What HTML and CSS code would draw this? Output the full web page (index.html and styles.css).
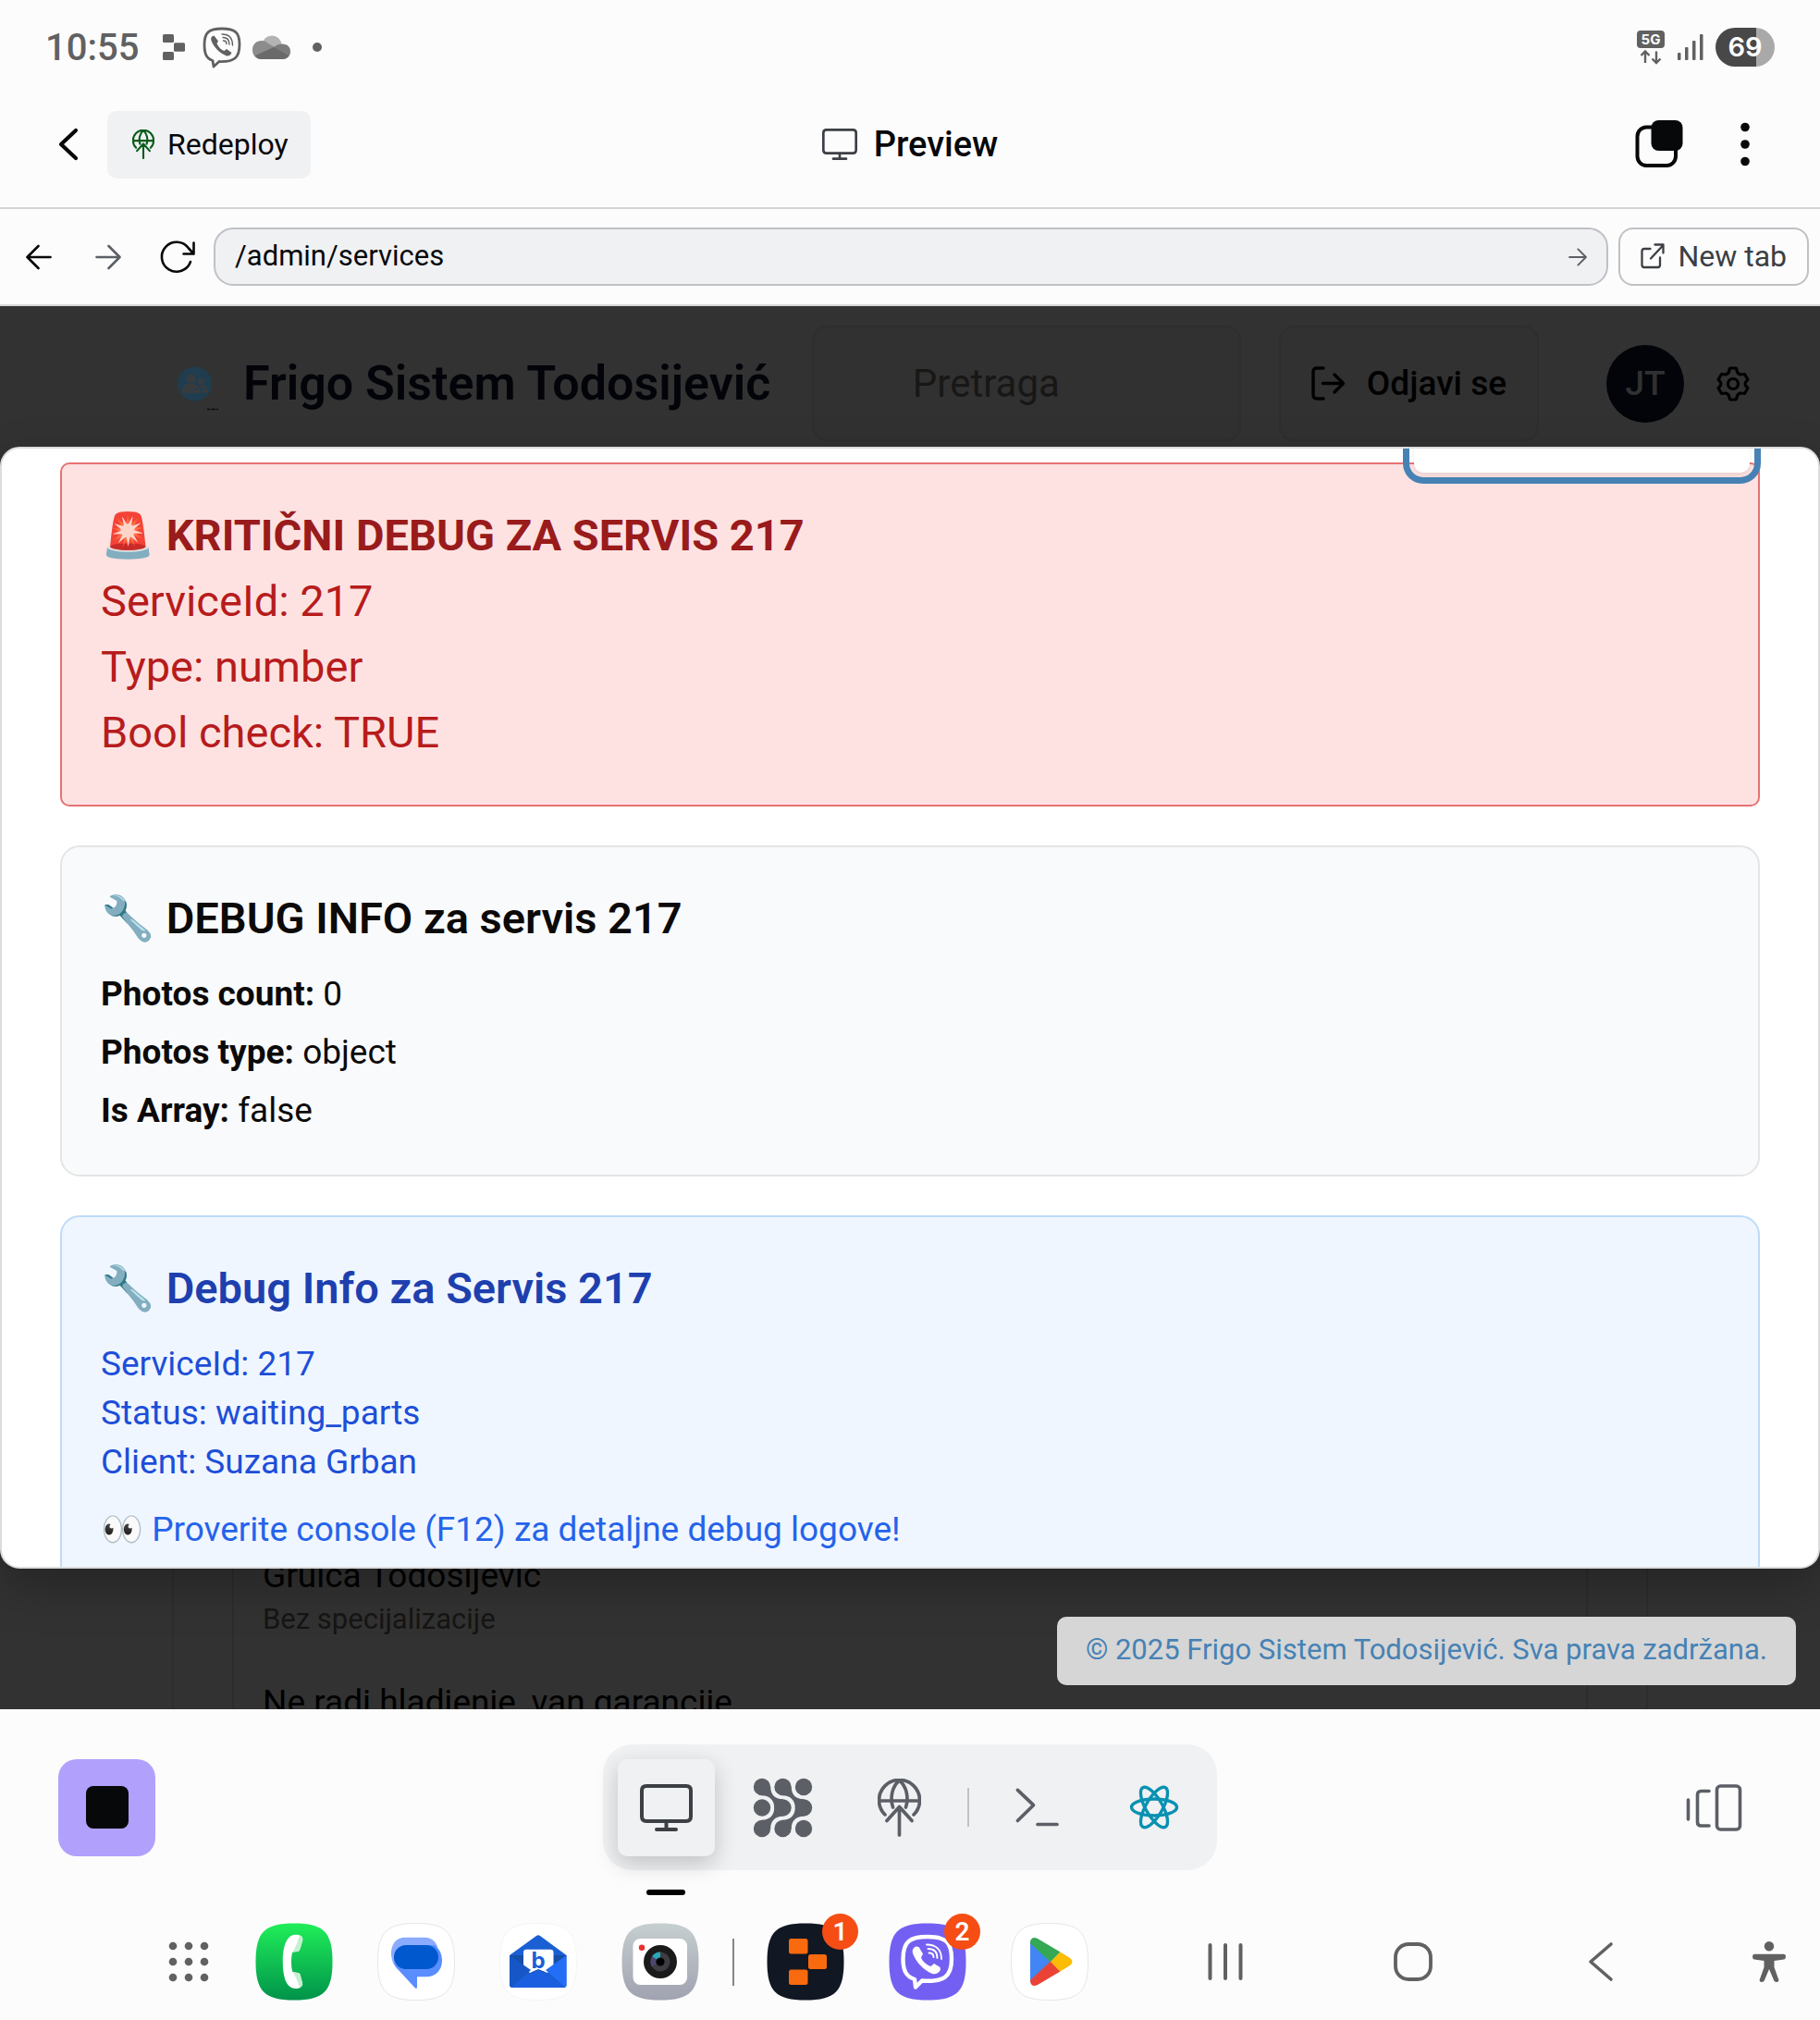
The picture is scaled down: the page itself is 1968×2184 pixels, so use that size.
FILE: index.html
```html
<!DOCTYPE html>
<html lang="sr-Latn">
<head>
<meta charset="utf-8">
<meta name="viewport" content="width=device-width, initial-scale=1">
<title>Preview</title>
<link rel="stylesheet" href="styles.css">
</head>
<body>
<svg class="defs" aria-hidden="true">
  <defs>
    <symbol id="i-deploy" viewBox="0 0 47 63">
      <path d="M8 39A22 22 0 1 1 39 39M1.500 24H45.500M23.500 2C16 8 13 20 16.500 31M23.500 2C31 8 34 20 30.500 31M23.500 61V31M10 45.500L23.500 30.500L37 45.500" fill="none" stroke="currentColor" stroke-linecap="round" stroke-linejoin="round"/>
    </symbol>
    <symbol id="i-monitor" viewBox="0 0 57 51">
      <path d="M7 2H50Q55 2 55 7V35Q55 40 50 40H7Q2 40 2 35V7Q2 2 7 2ZM28.500 40V49M18 49H39" fill="none" stroke="currentColor" stroke-width="4" stroke-linecap="round"/>
    </symbol>
    <symbol id="i-arrow" viewBox="0 0 28 28">
      <path d="M1.500 14H26M14.500 2L26.500 14L14.500 26" fill="none" stroke="currentColor" stroke-width="2.600" stroke-linecap="round" stroke-linejoin="round"/>
    </symbol>
    <symbol id="i-tile" viewBox="0 0 84 84">
      <path d="M42 .5C10 .5 .5 10 .5 42S10 83.500 42 83.500 83.500 74 83.500 42 74 .5 42 .5Z"/>
    </symbol>
  </defs>
</svg>

<div class="status">
  <div class="status-left">
    <span class="clock">10:55</span>
    <svg width="24" height="28" viewBox="0 0 24 28" fill="#616161"><rect width="12" height="9" rx="1.500"/><rect x="12" y="9.300" width="12" height="9.500" rx="1.500"/><rect y="19" width="12" height="9" rx="1.500"/></svg>
    <svg class="status-viber" width="42" height="44" viewBox="0 0 42 44" fill="none" stroke="#616161" stroke-linecap="round">
      <path d="M21 2C7 2 2 6 2 19C2 29 4 34 11 36.500L12 43L18 37.500C35 38 40 33 40 19C40 6 35 2 21 2Z" stroke-width="2.800" stroke-linejoin="round"/>
      <path d="M12.500 9.500C9.500 10 8.500 12 9.500 15C12.500 22.500 18 28 26 31.500C28.500 32 31 30 31.500 28L26 24L23.500 26C20 25 17 21.500 15.500 18L17 15.500Z" fill="#616161" stroke="none"/>
      <path d="M21 8C28.500 8 32.500 12 32.500 20M22 11.500C27 11.500 29 14 29 19M22.500 15C25 15 26 16 26 18.500" stroke-width="1.400"/>
    </svg>
    <svg width="41" height="27" viewBox="0 0 41 27"><circle cx="21" cy="11" r="10.500" fill="#b3b3b3"/><path d="M10 6C13 6 15 7 17 9L31 17L10 26C3 26 0 21 0 16C0 10 4 6 10 6Z" fill="#8c8c8c"/><path d="M32 9.500C38 9.500 41 13 41 18C41 23 37 26 32 26H20L22 14C25 11 28 9.500 32 9.500Z" fill="#7c7c7c"/><path d="M3 22L23 13L39 22C37 25 35 26 32 26H10C7 26 5 25 3 22Z" fill="#6a6a6a"/></svg>
    <span class="dot"></span>
  </div>
  <div class="status-right">
    <svg width="32" height="36" viewBox="0 0 32 36"><rect x="1" width="30" height="19" rx="4" fill="#616161"/><text x="16" y="15" text-anchor="middle" class="net">5G</text><path d="M10 35V23M5.500 27L10 22.500L14.500 27M22 22.500V34.500M17.500 30.500L22 35L26.500 30.500" fill="none" stroke="#616161" stroke-width="2.400"/></svg>
    <svg width="28" height="28" viewBox="0 0 28 28" fill="#616161"><rect y="20" width="3.500" height="8" rx="1"/><rect x="8" y="14" width="3.500" height="14" rx="1"/><rect x="16" y="7" width="3.500" height="21" rx="1"/><rect x="24" width="3.500" height="28" rx="1"/></svg>
    <span class="battery">69</span>
  </div>
</div>

<header class="topbar">
  <div class="topbar-left">
    <button class="icon-btn" aria-label="Back"><svg width="22" height="36" viewBox="0 0 22 36"><path d="M19 3L3 18L19 33" fill="none" stroke="#07080a" stroke-width="4.200" stroke-linecap="round" stroke-linejoin="round"/></svg></button>
    <button class="redeploy"><svg width="24" height="32" class="green" stroke-width="4.200"><use href="#i-deploy"/></svg>Redeploy</button>
  </div>
  <h1 class="topbar-title"><svg width="38" height="34"><use href="#i-monitor"/></svg>Preview</h1>
  <div class="topbar-right">
    <button class="icon-btn" aria-label="Windows"><svg width="52" height="52" viewBox="0 0 52 52"><rect x="2.500" y="7.500" width="41.500" height="41.500" rx="10" fill="none" stroke="#07080a" stroke-width="4"/><rect x="17.500" y="0" width="34" height="33" rx="8" fill="#07080a"/></svg></button>
    <button class="icon-btn" aria-label="More"><svg width="10" height="48" viewBox="0 0 10 48" fill="#07080a"><circle cx="5" cy="5.500" r="4.800"/><circle cx="5" cy="24" r="4.800"/><circle cx="5" cy="42.500" r="4.800"/></svg></button>
  </div>
</header>

<nav class="urlbar">
  <button class="nav-btn" aria-label="Back"><svg class="flip" width="28" height="28"><use href="#i-arrow"/></svg></button>
  <button class="nav-btn muted" aria-label="Forward"><svg width="28" height="28"><use href="#i-arrow"/></svg></button>
  <button class="nav-btn" aria-label="Reload"><svg width="38" height="36" viewBox="0 0 38 36"><path d="M33 23A16 16 0 1 1 31 8.500L36.500 14.500M36.500 2.500V14.500H25.500" fill="none" stroke="currentColor" stroke-width="2.600" stroke-linecap="round" stroke-linejoin="round"/></svg></button>
  <form class="address">
    <input type="text" value="/admin/services" aria-label="Address">
    <button type="button" class="icon-btn" aria-label="Go"><svg width="20" height="20"><use href="#i-arrow"/></svg></button>
  </form>
  <a class="newtab" href="#"><svg width="26" height="28" viewBox="0 0 26 28"><path d="M10.500 6H4Q1.500 6 1.500 8.500V23.500Q1.500 26 4 26H18.500Q21 26 21 23.500V15.500M11 16.500L24.500 2M15.500 1.500H24.500V10.500" fill="none" stroke="currentColor" stroke-width="2.300" stroke-linecap="round" stroke-linejoin="round"/></svg>New tab</a>
</nav>

<div class="viewport">
  <div class="page">
    <header class="site-header">
      <div class="brand">
        <svg width="45" height="50" viewBox="0 -6.500 45 50"><circle cx="18.500" cy="18.500" r="18.500" fill="#203d50"/><g fill="#383b3d"><circle cx="14.500" cy="13" r="5"/><circle cx="25.500" cy="16" r="3.500"/><path d="M4.500 28.500C5 20 8 18.500 14.500 18.500S24 21 24.500 28.500Z"/><path d="M24 20C30 19.500 32 22 32.500 28H26Z"/></g><circle cx="19" cy="24" r="1.600" fill="#203d50"/><circle cx="27.500" cy="24.500" r="1.600" fill="#203d50"/><path d="M32 46H44" stroke="#0c0c0c" stroke-width="1.500" stroke-dasharray="3 1 5 1"/></svg>
        <span class="brand-name">Frigo Sistem Todosijević</span>
      </div>
      <input class="search" type="text" placeholder="Pretraga" aria-label="Pretraga">
      <button class="logout"><svg width="37" height="37" viewBox="0 0 37 37"><path d="M13 2H6Q2 2 2 6V31Q2 35 6 35H13M12.500 18.500H34M25 9L34.500 18.500L25 28" fill="none" stroke="#000" stroke-width="3.400" stroke-linecap="round" stroke-linejoin="round"/></svg>Odjavi se</button>
      <span class="avatar">JT</span>
      <button class="icon-btn" aria-label="Settings"><svg width="36" height="38" viewBox="0 0 36 38" fill="none" stroke="#000" stroke-width="3.200" stroke-linejoin="round"><path d="M15.500 2H20.500Q22 2 22 4.500Q22.500 8 26 9L30.500 8.500L34 14.500Q31 17 31 19T34 23.500L30.500 29.500L26 29Q22.500 30 22 33.500Q22 36 20.500 36H15.500Q14 36 14 33.500Q13.500 30 10 29L5.500 29.500L2 23.500Q5 21 5 19T2 14.500L5.500 8.500L10 9Q13.500 8 14 4.500Q14 2 15.500 2Z"/><circle cx="18" cy="19" r="5.500"/></svg></button>
    </header>
    <main class="board">
      <div class="panel"><div class="job">
        <p class="job-line">Gruica Todosijević</p>
        <p class="job-sub">Bez specijalizacije</p>
        <p class="job-line job-note">Ne radi hladjenje, van garancije</p>
      </div></div>
    </main>
  </div>

  <section class="dialog" role="dialog" aria-label="Servis 217">
    <section class="card card-red">
      <h2>🚨 KRITIČNI DEBUG ZA SERVIS 217</h2>
      <p>ServiceId: 217</p>
      <p>Type: number</p>
      <p>Bool check: TRUE</p>
    </section>
    <section class="card card-grey">
      <h2>🔧 DEBUG INFO za servis 217</h2>
      <p><strong>Photos count:</strong> 0</p>
      <p><strong>Photos type:</strong> object</p>
      <p><strong>Is Array:</strong> false</p>
    </section>
    <section class="card card-blue">
      <h2>🔧 Debug Info za Servis 217</h2>
      <p>ServiceId: 217</p>
      <p>Status: waiting_parts</p>
      <p>Client: Suzana Grban</p>
      <p class="hint">👀 Proverite console (F12) za detaljne debug logove!</p>
    </section>
    <button class="floating" aria-label="Zatvori"></button>
  </section>

  <footer class="copyright">© 2025 Frigo Sistem Todosijević. Sva prava zadržana.</footer>
</div>

<div class="toolbar">
  <div class="toolbar-side"><button class="stop" aria-label="Stop"><span></span></button></div>
  <div class="tools">
    <button class="tool active" aria-label="Preview"><svg width="57" height="51"><use href="#i-monitor"/></svg></button>
    <button class="tool" aria-label="Agent"><svg width="63" height="63" viewBox="0 0 63 63" fill="currentColor"><circle cx="9" cy="9" r="9.200"/><circle cx="31.500" cy="9" r="9.200"/><circle cx="54" cy="9" r="9.200"/><circle cx="9" cy="31.500" r="9.200"/><circle cx="31.500" cy="31.500" r="9.200"/><circle cx="54" cy="31.500" r="9.200"/><circle cx="9" cy="54" r="9.200"/><circle cx="31.500" cy="54" r="9.200"/><circle cx="54" cy="54" r="9.200"/><path d="M18.200 9C18.200 17 23 22.300 31.500 22.300V40.700C23 40.700 18.200 46 18.200 54H9V44.800C17 44.800 22.300 39.500 22.300 31.500S17 18.200 9 18.200V9Z"/><path d="M40.700 9C40.700 17 45.500 22.300 54 22.300V40.700C45.500 40.700 40.700 46 40.700 54H31.500V44.800C39.500 44.800 44.800 39.500 44.800 31.500S39.500 18.200 31.500 18.200V9Z"/></svg></button>
    <button class="tool" aria-label="Deployments"><svg width="47" height="63" stroke-width="3.700"><use href="#i-deploy"/></svg></button>
    <span class="tools-sep"></span>
    <button class="tool" aria-label="Shell"><svg width="48" height="42" viewBox="0 0 48 42"><path d="M2.400 2.400L19.500 18.700L2.400 35.500M24 39.500H45" fill="none" stroke="currentColor" stroke-width="3.700" stroke-linecap="round" stroke-linejoin="round"/></svg></button>
    <button class="tool react" aria-label="React"><svg width="54" height="54" viewBox="-27 -27 54 54" fill="none" stroke="currentColor" stroke-width="3.400"><ellipse rx="24.500" ry="9"/><ellipse rx="24.500" ry="9" transform="rotate(60)"/><ellipse rx="24.500" ry="9" transform="rotate(-60)"/></svg></button>
  </div>
  <div class="toolbar-side end"><button class="icon-btn" aria-label="Tabs"><svg width="61" height="51" viewBox="0 0 61 51" fill="none" stroke="#5c5f66" stroke-width="3.600" stroke-linecap="round"><path d="M2.500 17V38M25 7.500H16.500Q12.500 7.500 12.500 11.500V41Q12.500 45 16.500 45H25"/><rect x="33.500" y="2" width="25" height="47" rx="4"/></svg></button></div>
</div>

<nav class="dock">
  <button class="app" aria-label="Apps"><svg width="84" height="84" viewBox="0 0 84 84" fill="#616161"><circle cx="25" cy="25" r="4.300"/><circle cx="42" cy="25" r="4.300"/><circle cx="59" cy="25" r="4.300"/><circle cx="25" cy="42" r="4.300"/><circle cx="42" cy="42" r="4.300"/><circle cx="59" cy="42" r="4.300"/><circle cx="25" cy="59" r="4.300"/><circle cx="42" cy="59" r="4.300"/><circle cx="59" cy="59" r="4.300"/></svg></button>
  <div class="apps">
    <button class="app" aria-label="Phone"><svg width="84" height="84" viewBox="0 0 84 84"><defs><linearGradient id="gp" x2="0" y2="1"><stop stop-color="#20ee59"/><stop offset="1" stop-color="#00934a"/></linearGradient></defs><use href="#i-tile" fill="url(#gp)"/><path d="M43.600 12.700C33 13 29.800 27 29.800 42S33 71 43.600 71C48 71 51.500 69 51 65L48.500 55.500Q48 54 46 54L40.500 53C38.500 49 38.500 35 40.500 31.500L46 31Q48 30.500 48.500 28L51.200 19C52 14 48 12.700 43.600 12.700Z" fill="#fff"/><path d="M48 13.500Q52 15 51.200 19L48.500 28Q48 30.500 46 31L40.500 31.500Q45 24 48 13.500ZM48 70Q52 68 51 65L48.500 55.500Q48 54 46 54L40.500 53Q45 60 48 70Z" fill="#c4efd2"/></svg></button>
    <button class="app" aria-label="Messages"><svg width="84" height="84" viewBox="0 0 84 84"><use href="#i-tile" fill="#fff" stroke="#e6e6e6"/><path d="M30 15.700H51C60 15.700 66 22 66 33L22 50C12 42 11 16 30 15.700Z" fill="#8aabff"/><path d="M34 24H62C67 28 70 33 70 41C70 51 63 58.300 53 58.300H43V69Q43 72.500 40.500 70L22 50C14 40 20 24 34 24Z" fill="#5a8dff"/><rect x="18" y="24" width="48" height="26" rx="13" fill="#0058cf"/></svg></button>
    <button class="app" aria-label="Mail"><svg width="84" height="84" viewBox="0 0 84 84"><use href="#i-tile" fill="#fff" stroke="#f5f5f5"/><path d="M11 35L40 14Q42 12.500 44 14L72.500 35V67Q72.500 70 69.500 70H14Q11 70 11 67Z" fill="#1b5fd4"/><path d="M11 35H72.500L42 58Z" fill="#174ea6"/><path d="M26 32Q26 28.700 29 28.700H55Q58.500 28.700 58.500 32V48L52 54L42 50L33 54L26 48Z" fill="#fff"/><path d="M72.500 35V67Q72.500 69 71 69.500L50 51Z" fill="#246df5"/><path d="M11 35V67Q11 69 13 69.500L34 51Z" fill="#1656c6"/><path d="M13 69.500L39 52Q42 50 45 52L71 69.500Q70 70 69 70H15Q14 70 13 69.500Z" fill="#1b5fe0"/><text x="42" y="49" text-anchor="middle" class="mail-b">b</text></svg></button>
    <button class="app" aria-label="Camera"><svg width="84" height="84" viewBox="0 0 84 84"><defs><linearGradient id="gc" x2="0" y2="1"><stop stop-color="#c6cfd0"/><stop offset="1" stop-color="#a0a2b0"/></linearGradient></defs><use href="#i-tile" fill="url(#gc)"/><rect x="12.500" y="17" width="58.500" height="50" rx="8" fill="#fff"/><circle cx="42" cy="42" r="18" fill="#1b1a1b"/><circle cx="42" cy="42" r="10.500" fill="#3f3d42"/><path d="M42 42V31.500A10.500 10.500 0 0 0 33 36.500Z" fill="#27a9b8"/><path d="M42 42L33 36.500A10.500 10.500 0 0 0 33 47.500Z" fill="#4c4770"/><circle cx="42" cy="42" r="4.600" fill="#000"/><circle cx="22" cy="26.700" r="3.200" fill="#e93030"/></svg></button>
  </div>
  <span class="dock-sep"></span>
  <div class="apps">
    <button class="app" aria-label="Replit"><svg width="84" height="84" viewBox="0 0 84 84"><use href="#i-tile" fill="#111723"/><g fill="#f9690e"><rect x="24" y="17" width="20.500" height="16.500" rx="2.500"/><rect x="45" y="34" width="20" height="16" rx="2.500"/><rect x="24" y="50.500" width="20.500" height="16.500" rx="2.500"/></g></svg><span class="badge">1</span></button>
    <button class="app" aria-label="Viber"><svg width="84" height="84" viewBox="0 0 84 84" fill="none" stroke="#fff" stroke-linecap="round"><use href="#i-tile" fill="#7360f2" stroke="none"/><path d="M42 15C23 15 15.500 20 15.500 39C15.500 52 19 58 28 61L29 69.500L36 62.500C60 64 68 58 68 39C68 20 61 15 42 15Z" stroke-width="4.400" stroke-linejoin="round"/><path d="M29 25.500C26 27 25 30 26 33C30 43 37 50.500 47 55C51 56 54.500 54 56 50.500L55.500 48L49 44L45.500 47C41 45.500 36 41 35 37.500L37 33.500L32.500 26Z" fill="#fff" stroke="none"/><path d="M41 23.500C51 23.500 57 29 57 39M42.500 28C49 28 52.500 31.500 52.500 38M43.500 32.500C47 32.500 48.500 34 48.500 37" stroke-width="1.900"/></svg><span class="badge">2</span></button>
    <button class="app" aria-label="Play Store"><svg width="84" height="84" viewBox="0 0 84 84"><use href="#i-tile" fill="#fff" stroke="#e6e6e6"/><path d="M21 19V65L43 42Z" fill="#4285f4"/><path d="M21 22Q21 16.500 25 16Q27 16 29 17L53.500 31.500L43 42.500Z" fill="#34a853"/><path d="M21 62Q21 67.500 25 68Q27 68 29 67L53.500 52.500L43 41.500Z" fill="#ea4335"/><path d="M53.500 31.500L64 38Q69 42 64 46L53.500 52.500L43 42Z" fill="#fbbc04"/></svg></button>
  </div>
  <div class="system">
    <button class="app" aria-label="Recents"><svg width="84" height="84" viewBox="0 0 84 84" stroke="#616161" stroke-width="4" stroke-linecap="round"><path d="M25.500 24V60M42 24V60M58.500 24V60"/></svg></button>
    <button class="app" aria-label="Home"><svg width="84" height="84" viewBox="0 0 84 84" fill="none" stroke="#616161" stroke-width="3.800"><rect x="23" y="23" width="38" height="38" rx="14"/></svg></button>
    <button class="app" aria-label="Back"><svg width="84" height="84" viewBox="0 0 84 84" fill="none" stroke="#616161" stroke-width="3.600" stroke-linecap="round" stroke-linejoin="round"><path d="M53 23L31 42L53 61"/></svg></button>
  </div>
  <button class="app access" aria-label="Accessibility"><svg width="84" height="84" viewBox="0 0 84 84" fill="#616161"><circle cx="42" cy="25.300" r="5.200"/><path d="M26 33.700H58Q60 34 60 36.500T58 39.500L47.500 41V48L52.500 62Q52 64.500 49.500 64L47.500 63L42 50L36.500 63L34.500 64Q32 64.500 31.500 62L36.500 48V41L26 39.500Q24 39 24 36.500T26 33.700Z"/></svg></button>
</nav>
</body>
</html>
```
FILE: styles.css
```css
* { box-sizing: border-box; }

html, body { margin: 0; height: 100%; }

body {
  display: flex;
  flex-direction: column;
  background: #fcfcfc;
  color: #07080a;
  font-family: Roboto, "Liberation Sans", sans-serif;
  font-size: 32px;
  overflow: hidden;
}

h1, h2, p { margin: 0; }
svg { display: block; flex: none; overflow: visible; }
button, input { font: inherit; color: inherit; }
button { border: 0; background: none; padding: 0; }
a { text-decoration: none; }
.defs { position: absolute; width: 0; height: 0; }
.icon-btn { display: flex; }

/* Status bar */
.status {
  flex: none;
  display: flex;
  justify-content: space-between;
  align-items: center;
  height: 90px;
  padding: 12px 49px 0 49px;
  color: #616161;
}
.status-left { display: flex; align-items: center; gap: 12px; }
.clock { font-size: 40px; font-weight: 500; margin-right: 14px; }
.status-viber { margin-left: 7px; }
.dot { width: 10px; height: 10px; margin-left: 12px; border-radius: 5px; background: #616161; }
.status-right { display: flex; align-items: center; gap: 13px; }
.net { font: 700 15px Inter, sans-serif; fill: #fcfcfc; }
.battery {
  width: 64px;
  height: 42px;
  border-radius: 21px;
  background: linear-gradient(90deg, #484848 69%, #a9a9a9 69%);
  color: #fff;
  font: 600 29px/42px Inter, sans-serif;
  text-align: center;
}

/* Preview header */
.topbar {
  flex: none;
  display: grid;
  grid-template-columns: 1fr auto 1fr;
  align-items: center;
  height: 136px;
  padding: 0 63px 2px;
  border-bottom: 2px solid #d4d4d4;
}
.topbar-left { display: flex; align-items: center; gap: 31px; }
.redeploy {
  display: flex;
  align-items: center;
  gap: 14px;
  height: 73px;
  padding: 0 24px 0 27px;
  border-radius: 10px;
  background: #f0f1f3;
}
.green { color: #0a5c1c; }
.topbar-title { display: flex; align-items: center; gap: 18px; font-size: 38px; font-weight: 500; }
.topbar-title svg { color: #3c3f44; }
.topbar-right { display: flex; align-items: center; justify-content: flex-end; gap: 62px; padding-right: 13px; }

/* Address row */
.urlbar {
  flex: none;
  display: flex;
  align-items: center;
  height: 105px;
  padding: 0 12px 0 4px;
  border-bottom: 2px solid #d6d9d8;
}
.nav-btn { display: flex; justify-content: center; width: 75px; }
.muted { color: #5c5f66; }
.flip { transform: scaleX(-1); }
.address {
  flex: 1;
  display: flex;
  align-items: center;
  height: 63px;
  margin: 0 11px 0 2px;
  padding: 0 21px;
  border: 2px solid #bfc1c4;
  border-radius: 21px;
  background: #f0f1f3;
}
.address input { flex: 1; border: 0; padding: 0 0 2px; background: none; outline: 0; font-size: 31px; }
.address svg { color: #5c5f66; }
.newtab {
  display: flex;
  align-items: center;
  gap: 14px;
  height: 63px;
  padding: 0 22px 2px;
  border: 2px solid #bfc1c4;
  border-radius: 16px;
  color: #3c3f44;
}

/* Previewed site */
.viewport { position: relative; flex: 1; min-height: 0; overflow: hidden; background: #323232; }
.page { display: flex; flex-direction: column; height: 100%; }
.site-header {
  flex: none;
  display: flex;
  align-items: center;
  padding: 21px 76px 21px 192px;
  color: #000;
}
.brand { flex: 1; display: flex; align-items: center; gap: 26px; }
.brand-name { color: #030409; font-size: 52px; font-weight: 600; white-space: nowrap; }
.search {
  width: 464px;
  height: 125px;
  margin-right: 41px;
  padding: 0 107px;
  border: 2px solid #2e2e2e;
  border-radius: 16px;
  background: #313131;
  font-size: 42px;
}
.search::placeholder { color: #181716; opacity: 1; }
.logout {
  display: flex;
  align-items: center;
  gap: 23px;
  height: 125px;
  margin-right: 73px;
  padding: 0 33px;
  border: 2px solid #2e2e2e;
  border-radius: 16px;
  background: #313131;
  font-size: 37px;
  font-weight: 500;
}
.avatar {
  width: 84px;
  height: 84px;
  margin-right: 35px;
  border-radius: 50%;
  background: #030409;
  color: #303132;
  font-size: 37px;
  font-weight: 500;
  line-height: 84px;
  text-align: center;
}
.board { flex: 1; min-height: 0; padding: 0 186px; }
.panel { height: 100%; padding: 0 63px; border: solid #2d2d2d; border-width: 0 2px; }
.job {
  display: flex;
  flex-direction: column;
  justify-content: flex-end;
  height: 100%;
  padding: 0 31px;
  border: solid #2d2d2d;
  border-width: 0 2px;
}
.job-line { color: #000; font-size: 37px; line-height: 53px; }
.job-sub { color: #161514; font-size: 31px; line-height: 42px; }
.job-note { margin: 42px 0 -19px; }

/* Dialog over the site */
.dialog {
  position: absolute;
  inset: 152px 0;
  display: flex;
  flex-direction: column;
  gap: 42px;
  padding: 15px 63px 0;
  border: 2px solid #dcdcdc;
  border-radius: 21px;
  background: #fff;
  box-shadow: 0 20px 50px rgba(0, 0, 0, .25);
  overflow: hidden;
}
.card {
  flex: none;
  padding: 41px 42px 43px;
  border: 2px solid;
  border-radius: 21px;
  font-size: 37px;
  line-height: 53px;
}
.card h2 { margin-bottom: 20px; font-size: 47px; font-weight: 600; line-height: 71px; }
.card-red { border-color: #e57373; border-radius: 10px; background: #fee2e2; color: #b71c1c; font-size: 47px; line-height: 71px; }
.card-red h2 { margin: 0; color: #991b1b; font-weight: 700; }
.card-grey { border-color: #e5e5e5; background: #f9fafc; color: #0c0a09; }
.card-grey p + p { margin-top: 10px; }
.card-blue { border-color: #bfdbf7; background: #eff6ff; color: #1d4ed8; }
.card-blue h2 { color: #1e40af; }
.card-blue .hint { margin-top: 20px; color: #2563eb; }
.floating {
  position: absolute;
  top: -80px;
  right: 74px;
  width: 363px;
  height: 106px;
  border-radius: 10px;
  background: #fff;
  outline: 7px solid #4682b4;
  outline-offset: 5px;
  box-shadow: 0 3px 5px rgba(0, 0, 0, .08);
}
.copyright {
  position: absolute;
  right: 26px;
  bottom: 26px;
  padding: 15px 31px 17px;
  border-radius: 10px;
  background: #d6d6d6;
  color: #4682b4;
  font-size: 31px;
  line-height: 42px;
}

/* Workspace toolbar */
.toolbar {
  flex: none;
  display: grid;
  grid-template-columns: 1fr auto 1fr;
  align-items: center;
  padding: 38px 63px 36px;
}
.toolbar-side { display: flex; }
.end { justify-content: flex-end; padding-right: 21px; }
.stop {
  display: flex;
  align-items: center;
  justify-content: center;
  width: 105px;
  height: 105px;
  border-radius: 20px;
  background: #b1a1fd;
}
.stop span { width: 46px; height: 46px; border-radius: 8px; background: #07080a; }
.tools {
  display: flex;
  align-items: center;
  gap: 21px;
  height: 136px;
  padding: 0 16px;
  border-radius: 32px;
  background: #f0f1f3;
}
.tool {
  position: relative;
  display: flex;
  align-items: center;
  justify-content: center;
  width: 105px;
  height: 105px;
  border-radius: 10px;
  color: #5c5f66;
}
.active { background: #f0f1f3; color: #3c3f44; box-shadow: 0 8px 24px rgba(0, 0, 0, .2); }
.active::after {
  content: "";
  position: absolute;
  left: 31px;
  bottom: -42px;
  width: 42px;
  height: 6px;
  border-radius: 3px;
  background: #000;
}
.react { color: #0891b2; }
.tools-sep { width: 2px; height: 42px; background: #bfc1c4; }

/* System dock */
.dock {
  flex: none;
  display: flex;
  align-items: center;
  height: 126px;
  padding: 0 13px 0 162px;
}
.app { position: relative; width: 84px; height: 84px; }
.apps { display: flex; gap: 48px; margin-left: 30px; }
.dock-sep { width: 2px; height: 51px; margin-left: 36px; background: #868686; }
.dock-sep + .apps { margin-left: 35px; }
.system { display: flex; gap: 119px; margin-left: auto; }
.access { margin-left: 98px; }
.badge {
  position: absolute;
  top: -10px;
  right: -15px;
  width: 39px;
  height: 39px;
  border-radius: 50%;
  background: #f64d15;
  color: #fff;
  font-size: 28px;
  font-weight: 600;
  line-height: 40px;
  text-align: center;
}
.mail-b { font: 700 24px Inter, sans-serif; fill: #1b5fd4; }
```
